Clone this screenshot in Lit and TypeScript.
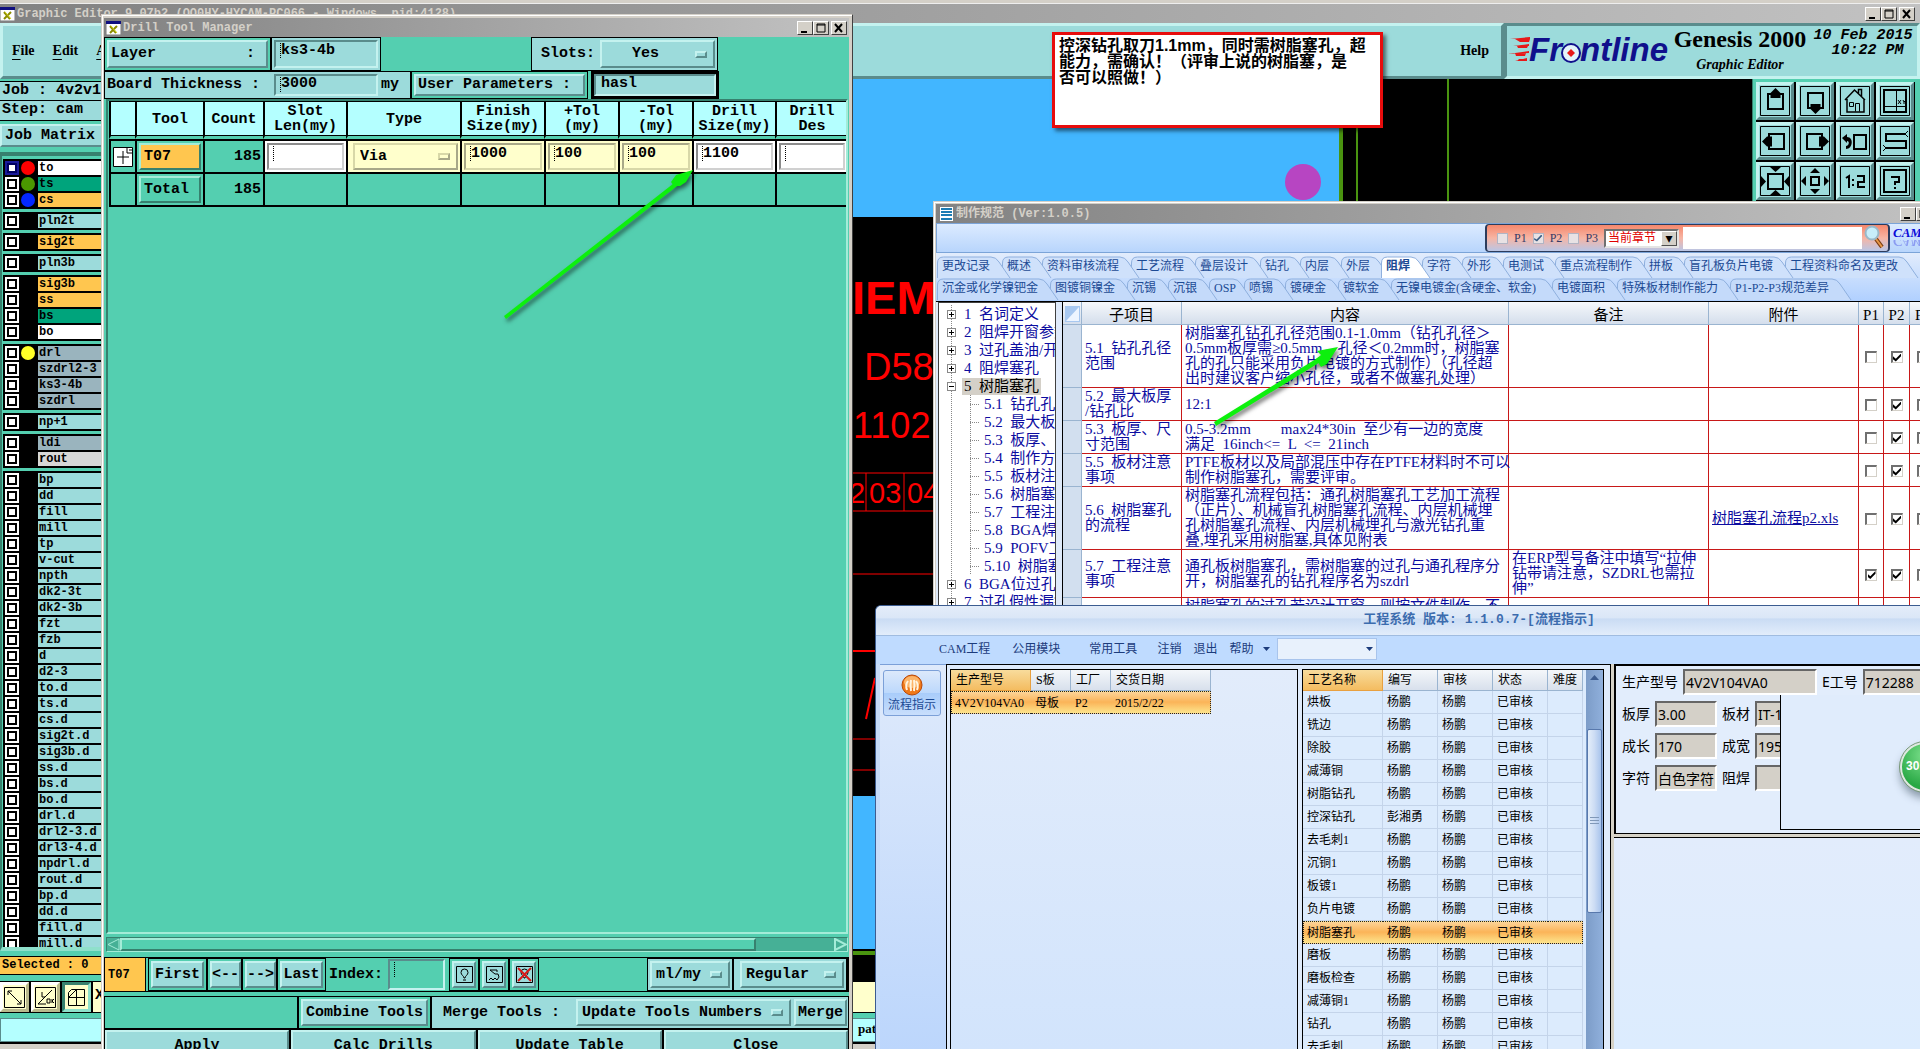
import { LitElement, html, svg, css } from "lit";
import { customElement } from "lit/decorators.js";
import { classMap } from "lit/directives/class-map.js";

const base = css`
  *, *::before, *::after { box-sizing: border-box; }
  :host {
    --teal: #54cfb0;
    --cyan: #9cdbdb;
    --ice: #b4ffff;
    --amber: #ffc64f;
    --cream: #ffffcc;
    --lite: #c4f2ef;
    --dim: #5a8c8c;
    --mono: "Liberation Mono", "DejaVu Sans Mono", monospace;
    --song: "Liberation Serif", "Noto Sans CJK SC", serif;
    display: block;
    overflow: hidden;
  }
  button, input, select { font: inherit; color: inherit; margin: 0; border-radius: 0; outline: 0; }
  button { cursor: pointer; padding: 0; }
  .title {
    display: flex; align-items: center; gap: 2px; height: 19px; padding: 0 2px;
    background: linear-gradient(90deg, #828282, #c2c2c2);
    color: #d4d0c8; font: bold 12px/16px var(--mono); white-space: pre;
  }
  .title > svg { flex: none; }
  .title .txt { flex: 1; overflow: hidden; }
  .wc { display: flex; }
  .wc button {
    width: 16px; height: 14px; background: #d4d0c8; display: block;
    border: 1px solid; border-color: #fff #404040 #404040 #fff;
  }
  .wc button:last-child { margin-left: 2px; }
  .wc svg { display: block; }
  .raised { border: 2px solid; border-color: var(--lite) var(--dim) var(--dim) var(--lite); background: var(--cyan); }
  .sunk { border: 2px solid; border-color: var(--dim) var(--lite) var(--lite) var(--dim); background-color: var(--cyan); }
`;

const controls = html`<div class="wc">
  <button aria-label="Minimize"><svg width="14" height="12"><path d="M3 9h6v2H3z" /></svg></button>
  <button aria-label="Maximize"><svg width="14" height="12"><path d="M3 2h8v8H3zM3 3h8" fill="none" stroke="#000" /></svg></button>
  <button aria-label="Close"><svg width="14" height="12"><path d="M3 2l7 8M10 2l-7 8" stroke="#000" stroke-width="2" /></svg></button>
</div>`;

const xIcon = html`<svg width="15" height="14" viewBox="0 0 15 14" aria-hidden="true">
  <path d="M0 0h15v14H0z" fill="#fff" stroke="#777" /><path d="M0 0h15v3H0z" fill="#101080" />
  <path d="M4 5l6 7M11 5l-7 7" stroke="#8c8c00" stroke-width="2" /><path d="M5 5l6 7" stroke="#d8d820" />
</svg>`;

type Layer = [name: string, fill: string, dot?: string];
const groups: Layer[][] = [
  [["to", "white", "red"], ["ts", "green", "green"], ["cs", "amber", "blue"]],
  [["pln2t", "cyan"]],
  [["sig2t", "amber"]],
  [["pln3b", "cyan"]],
  [["sig3b", "amber"], ["ss", "amber"], ["bs", "green"], ["bo", "white"]],
  [["drl", "slate", "yellow"], ["szdrl2-3", "slate"], ["ks3-4b", "slate"], ["szdrl", "slate"]],
  [["np+1", "cyan"]],
  [["ldi", "slate"], ["rout", "grey"]],
  ["bp", "dd", "fill", "mill", "tp", "v-cut", "npth", "dk2-3t", "dk2-3b", "fzt", "fzb", "d", "d2-3",
    "to.d", "ts.d", "cs.d", "sig2t.d", "sig3b.d", "ss.d", "bs.d", "bo.d", "drl.d", "drl2-3.d", "drl3-4.d",
    "npdrl.d", "rout.d", "bp.d", "dd.d", "fill.d", "mill.d"].map((n): Layer => [n, "cyan"]),
];

const box = svg`<path d="M.5 .5h29v29H.5z" fill="none" stroke="#000" />`;
const tools: [string, unknown][] = [
  ["Pan up", svg`${box}<path d="M8 8h15v15H8z" fill="none" stroke="#000" stroke-width="2"/><path d="M15.500 2l5 5v5h-10V7z"/>`],
  ["Pan down", svg`${box}<path d="M8 7h15v15H8z" fill="none" stroke="#000" stroke-width="2"/><path d="M15.500 28l-5-5v-5h10v5z"/>`],
  ["Home", svg`${box}<g fill="none" stroke="#000"><path d="M5 14L14.500 4 25 14M7 13v13h17V13M18.500 8V3.500h3V11" stroke-width="1.500"/><path d="M9.500 16.500h4v4h-4zM15.500 25.500v-8h4v8"/></g>`],
  ["XY view", svg`${box}<g fill="none" stroke="#000"><path d="M4 4h22v22H4z" stroke-width="2"/><path d="M16.500 4v22M4 20.500h22M18 14l3 4M21 14l-3 4M23 14l1 2 2-2M24 16v2"/></g>`],
  ["Pan left", svg`${box}<path d="M9 8h15v15H9z" fill="none" stroke="#000" stroke-width="2"/><path d="M2 15.500l5-5h5v10H7z"/>`],
  ["Pan right", svg`${box}<path d="M7 8h15v15H7z" fill="none" stroke="#000" stroke-width="2"/><path d="M29 15.500l-5-5h-5v10h5z"/>`],
  ["Previous view", svg`${box}<path d="M14 9h12v14H14z" fill="none" stroke="#000" stroke-width="2"/><path d="M2 12l5-4v3c7 0 6 12-1 12v-3c3 0 4-5 1-5v2z"/>`],
  ["Snake", svg`${box}<path d="M26 8H6v7h20v7H6" fill="none" stroke="#000" stroke-width="2"/><path d="M25 8l3-3M25 8l3 3M6 22l-3-3M6 22l-3 3" stroke="#000"/>`],
  ["Zoom in", svg`${box}<path d="M8 8h15v15H8z" fill="none" stroke="#000" stroke-width="2"/><path d="M10 1h11l-5.500 5zM10 29h11l-5.500-5zM1 10v11l5-5.500zM29 10v11l-5-5.500z"/>`],
  ["Zoom out", svg`${box}<path d="M11 11h8v8h-8z" fill="none" stroke="#000" stroke-width="2"/><path d="M10 7h10l-5-5zM10 23h10l-5 5zM6 10v10l-5-5zM24 10v10l5-5z"/>`],
  ["Scale 1:2", svg`${box}<path d="M6 12l3-2v12M13 13v2M13 18v2M17 10h7v6h-6v5h7" fill="none" stroke="#000" stroke-width="2"/>`],
  ["Help", svg`${box}<path d="M4 4h22v22H4zM11 11h8v5h-4v3M15 21v2" fill="none" stroke="#000" stroke-width="2"/>`],
];

@customElement("graphic-editor")
class GraphicEditor extends LitElement {
  static styles = [base, css`
    :host { display: flex; flex-direction: column; background: var(--teal); color: #000; }
    .title { border-top: 0; flex: none; padding: 0 5px 0 0; }
    .edge { height: 4px; flex: none; background: #d4d0c8; border-bottom: 1px solid #eee; }
    .top { display: flex; flex: none; height: 56px; }
    .menu {
      flex: 1; display: flex; align-items: center; gap: 18px; padding: 0 12px 0 9px;
      font: bold 14px/18px "Liberation Serif", serif; border-width: 3px;
    }
    .menu button { background: none; border: 0; }
    .menu button:last-child { margin-left: auto; }
    .menu u { text-underline-offset: 4px; }
    .brand { flex: none; display: grid; grid-template-columns: 163px 139px 1fr; border-width: 3px; width: 416px; border-color: var(--dim) var(--lite) var(--lite) var(--dim); }
    .brand h1 { margin: 0; font: bold 24px/26px "Liberation Serif", serif; text-align: center; }
    .brand p { margin: 0; font: italic bold 14px/18px "Liberation Serif", serif; text-align: center; }
    .brand .name { display: grid; align-content: start; row-gap: 4px; white-space: nowrap; }
    .brand time { font: italic bold 15px/15px var(--mono); text-align: center; white-space: pre; padding-top: 2px; }
    .mid { flex: 1; min-height: 0; display: flex; }
    .side { width: 110px; flex: none; display: flex; flex-direction: column; font: bold 15px/18px var(--mono); white-space: nowrap; }
    .line { height: 20px; flex: none; padding: 0 2px; background: var(--cyan); border: 1px solid #000; border-width: 1px 0; }
    .line:first-child { margin-top: 2px; }
    .line + .line { height: 20px; border-top: 0; }
    .matrix { margin: 3px 0 5px; flex: none; height: 23px; border-width: 2px; text-align: left; padding-left: 3px; }
    .layers { flex: 1; min-height: 0; overflow: hidden; border: solid #37806e; border-width: 4px 0 0 2px; border-bottom: 4px solid #8fe0cb; padding: 3px 0 0 1px; display: flex; flex-direction: column; gap: 3px; font: bold 12px/14px var(--mono); }
    .grp { background: #000; padding: 1px 0; flex: none; }
    .lay { display: grid; grid-template-columns: 14px 15px 1fr; column-gap: 2px; height: 16px; padding: 1px 2px; align-items: center; }
    .lay input { appearance: none; width: 14px; height: 14px; border: 3px solid #fff; background: #fff; display: grid; }
    .lay input::before { content: ""; border: 2px solid #000; margin: -1px; }
    .lay input:checked { border-color: #1a1a9a; background: #1a1a9a; }
    .lay input:checked::before { background: #fff; border-color: #000060; }
    .dot { width: 14px; height: 14px; border-radius: 7px; }
    .name { padding-left: 1px; }
    .red { background: #f00; } .green { background: #4a9800; } .blue { background: #0428ff; } .yellow { background: #ffff28; }
    .n-white { background: #fff; } .n-green { background: #00a47c; } .n-amber { background: var(--amber); }
    .n-cyan { background: var(--cyan); } .n-slate { background: #9ab4be; } .n-grey { background: #d8d8d8; }
    .canvas { flex: 1; min-width: 0; background: #000; }
    .canvas svg { display: block; }
    .tools { flex: none; width: 168px; padding: 3px 5px 0 3px; border-left: 1px solid #37806e; }
    .tools > div { display: grid; grid-template-columns: repeat(4, 38px); gap: 2px; background: #000; padding-bottom: 2px; }
    .tools button { height: 38px; border-width: 3px; display: grid; place-items: center; }
    .sel { flex: none; height: 19px; margin: 5px 0 6px; background: var(--amber); border: 1px solid #000; border-width: 1px 0; font: bold 12px/16px var(--mono); padding-left: 2px; }
    .foot { flex: none; height: 68px; display: grid; grid-template-rows: 32px 5px 24px 1fr; }
    .snap { display: flex; gap: 2px; background: #000; padding: 1px 0; }
    .snap button { width: 29px; background: var(--cream); border: 3px solid; border-color: #fff #b9b98c #b9b98c #fff; display: grid; place-items: center; }
    .snap button:nth-child(3) { border-color: #37806e #8fe0cb #8fe0cb #37806e; }
    .snap label { flex: 1; background: var(--cream); font: bold 15px/28px var(--mono); padding-left: 2px; }
    .msg { grid-row: 3; background: var(--ice); border: 1px solid var(--dim); font: bold 13px/20px "Liberation Serif", serif; padding-left: 857px; }
    .rim { grid-row: 4; background: #d4d0c8; border-top: 2px solid #000; }
  `];
  render() {
    return html`
      <div class="edge"></div>
      <div class="title">${xIcon}<span class="txt">Graphic Editor 9.07b2 (OO0HY-HYCAM-PC066 - Windows  pid:4128)</span>${controls}</div>
      <div class="top">
        <nav class="menu raised"><button><u>F</u>ile</button><button><u>E</u>dit</button><button><u>A</u>ctions</button><button>Help</button></nav>
        <div class="brand raised">
          <svg width="163" height="46" viewBox="0 0 163 46" role="img" aria-label="Frontline">
            <path d="M3 13l20-2v2zM6 20l16-2v2zM1 28l21-3v2zM8 35l12-3v3zM8 13h15l-1 3h-9zM10 20h11l-1 2h-9zM8 27h11l-1 3h-9zM12 33h7l-1 2h-8z" fill="#e81818" />
            <g font-family="Liberation Sans" font-weight="bold" font-style="italic" font-size="33" fill="#10108c">
              <text x="22" y="35">Fr</text><text x="73" y="35">ntline</text></g>
            <circle cx="64" cy="27" r="9" fill="#e4f4fa" stroke="#10108c" stroke-width="2" /><path d="M64 23l4 4-4 4-4-4z" fill="#e81818" />
          </svg>
          <div class="name"><h1>Genesis 2000</h1><p>Graphic Editor</p></div>
          <time>10 Feb 2015
 10:22 PM</time>
        </div>
      </div>
      <div class="mid">
        <div class="side">
          <div class="line">Job : 4v2v104va0</div><div class="line">Step: cam</div>
          <button class="matrix raised">Job Matrix</button>
          <div class="layers">${groups.map((g) => html`<div class="grp">${g.map(([n, c, d]) => html`
            <label class="lay"><input type="checkbox" ?checked=${n === "to"} /><span class="dot ${d ?? ""}"></span><span class="name n-${c}">${n}</span></label>`)}</div>`)}
          </div>
          <div class="sel">Selected : 0</div>
        </div>
        <div class="canvas"><svg width="1640" height="902" viewBox="110 79 1640 902">
          <path d="M110 79h1229v138H110zM110 796h1229v153H110z" fill="#42b6ff" />
          <path d="M1339 79h4v140h-4zM1356 79h2v140h-2zM1447 79h2v140h-2zM110 951h1229v4H110z" fill="#4a9410" />
          <circle cx="1303" cy="182" r="18" fill="#b745c2" />
          <g fill="#f00" font-family="Liberation Sans">
            <text x="852" y="314" font-size="47" font-weight="bold">IEM</text>
            <text x="864" y="380" font-size="38">D58</text>
            <text x="853" y="438" font-size="36">1102</text>
            <text x="849" y="503" font-size="29">2</text><text x="869" y="503" font-size="29">03</text><text x="907" y="503" font-size="29">04</text>
          </g>
          <path d="M850 473h90M850 511h90M866 473v38M904 473v38M850 574h90M850 739h30M850 770h30" stroke="#f00" fill="none" />
          <path d="M850 651h30M875 678l-9 41" stroke="#f00" stroke-width="2" fill="none" />
        </svg></div>
        <div class="tools"><div>${tools.map(([t, i]) => html`<button class="raised" aria-label=${t}><svg width="30" height="30">${i}</svg></button>`)}</div></div>
      </div>
      <div class="foot">
        <div class="snap">
          <button aria-label="Diagonal"><svg width="21" height="21" fill="none" stroke="#000"><path d="M.5 .5h20v20H.5zM4 4l13 13M4 8V4h4M17 13v4h-4"/></svg></button>
          <button aria-label="Angle"><svg width="21" height="21" fill="none" stroke="#000"><path d="M.5 .5h20v20H.5zM3 17L17 3M3 17h8M7 5v5h3M12 12h3v4h-3zM17 12v4M19 12l-2 2 2 2"/></svg></button>
          <button aria-label="Grid"><svg width="21" height="21" fill="none" stroke="#000"><path d="M2.500 5.500l3-3h13v16h-16zM2.500 10.500h16M10.500 2.500v16M2.500 10.500l8-8"/></svg></button>
          <label>X</label>
        </div>
        <div class="msg">pattern</div>
        <div class="rim"></div>
      </div>`;
  }
}

@customElement("drill-manager")
class DrillManager extends LitElement {
  static styles = [base, css`
    :host { display: flex; flex-direction: column; background: #d4d0c8; border: 1px solid; border-color: #d4d0c8 #404040 #404040 #d4d0c8; box-shadow: inset 1px 1px #fff; padding: 3px 3px 0 2px; font: bold 15px/18px var(--mono); color: #000; }
    .body { flex: 1; min-height: 0; background: var(--teal); display: flex; flex-direction: column; white-space: pre; }
    .row { display: flex; flex: none; white-space: nowrap; }
    .r1 { height: 34px; } .r2 { height: 28px; }
    .cell { border: 1px solid #000; padding: 2px; display: flex; align-items: stretch; background: var(--teal); }
    .cell.c { background: var(--cyan); align-items: center; }
    .cell.c > * { align-self: stretch; }
    .cell.c > label, .cell.c > span { align-self: center; }
    .cell.c > .opt { align-self: stretch; }
    .cell > button { flex: 1; text-align: left; padding-left: 2px; white-space: pre; }
    .w1 { width: 167px; } .w2 { width: 110px; } .w3 { width: 187px; margin-left: 150px; padding-left: 9px; gap: 5px; }
    .w4 { width: 307px; gap: 3px; } .w4 label { width: 164px; } .w5 { width: 177px; } .w6 { width: 128px; margin-left: 3px; border-width: 3px; padding: 0; }
    input { min-width: 0; flex: 1; font-weight: bold; padding: 0 4px 7px 5px; }
    .w4 input { flex: none; width: 104px; padding-bottom: 3px; }
    .w6 input { padding-bottom: 2px; }
    .ibeam { background-image: repeating-linear-gradient(#000 0 1px, transparent 1px 2px); background-size: 1px 15px; background-position: 4px 1px; background-repeat: no-repeat; }
    .opt { display: grid; flex: 1; align-items: center; }
    .opt select { grid-area: 1 / 1; height: 100%; width: 100%; appearance: none; padding: 0 4px; font-weight: bold; }
    .opt::after { content: ""; grid-area: 1 / 1; justify-self: end; margin-right: 8px; width: 12px; height: 7px; border: 2px solid; border-color: var(--lite) var(--dim) var(--dim) var(--lite); pointer-events: none; }
    .w3 select { padding-left: 30px; }
    .view { flex: 1; min-height: 0; overflow: hidden; margin: 0 1px 0 2px; border: 2px solid; border-color: #37806e #a4ecd8 #a4ecd8 #37806e; padding-left: 1px; }
    table { border-collapse: separate; border-spacing: 0; table-layout: fixed; width: 738px; }
    th { height: 38px; background: var(--ice); border-left: 2px solid #000; border-top: 1px solid #000; border-bottom: 3px solid var(--teal); box-shadow: inset 0 -1px #000; padding: 0; line-height: 15px; }
    td { height: 33px; border-left: 2px solid #000; border-top: 2px solid #000; padding: 2px; text-align: right; }
    tr:last-child td { border-bottom: 2px solid #000; height: 34px; }
    td input, td button, td .opt { width: 100%; height: 27px; display: block; }
    td .opt { display: grid; }
    td input { border: 2px solid; border-color: #8c8c8c #d0d0d0 #d0d0d0 #8c8c8c; background-color: #fff; }
    .y { background: var(--cream); }
    .y input, .y select { background-color: var(--cream); border-color: #a8a888 #d8d8a8 #d8d8a8 #a8a888; }
    .y select { border-color: #d8d8a8 #a8a888 #a8a888 #d8d8a8; padding-left: 5px; }
    .y .opt { padding-left: 3px; }
    .y .opt::after { border-color: #d8d8a8 #a8a888 #a8a888 #d8d8a8; }
    .wh { background: #fff; }
    .tool { text-align: left; padding-left: 3px; border-color: #a4ecd8 #37806e #37806e #a4ecd8; background: var(--teal); }
    .tool.on { background: var(--amber); }
    td svg { display: block; margin: auto; }
    .sb { height: 15px; flex: none; margin: 3px 1px 5px 2px; display: flex; background: #46b096; border: 1px solid; border-color: #37806e #a4ecd8 #a4ecd8 #37806e; }
    .sb .thumb { flex: none; width: 636px; background: var(--teal); border: 2px solid; border-color: #a4ecd8 #37806e #37806e #a4ecd8; }
    .sb svg { flex: none; } .sb svg:last-child { margin-left: auto; }
    .bar { height: 35px; border: 1px solid #000; padding-right: 0; border-right: 2px solid #000; }
    .bar .cell { border-width: 1px; }
    .bar .cell > button { text-align: center; padding: 0; }
    .now { width: 41px; background: var(--amber); font-size: 12px; display: flex; align-items: center; padding-left: 3px; border-right: 1px solid #000; margin-right: 2px; }
    .b1 { width: 59px; } .b2 { width: 35px; } .b3 { width: 49px; } .b4 { width: 30px; }
    .idx { display: flex; align-items: center; padding: 1px 4px 1px 3px; gap: 5px; width: 123px; }
    .idx input { align-self: stretch; background-color: var(--teal); }
    .u1 { width: 86px; margin-left: auto; } .u2 { width: 114px; padding-left: 6px; }
    .bar .cell button svg { display: block; margin: auto; }
    .merge { height: 33px; margin-top: 4px; border: 1px solid #000; justify-content: flex-end; }
    .merge .cell { border-width: 0 0 0 2px; }
    .m1 { width: 133px; } .m1 > button, .m2 > button { text-align: center; padding: 0; } .m2 { width: 418px; padding-right: 1px; } .m2 label { padding: 0 10px 0 9px; width: 142px; }
    .m2 .opt { flex: none; width: 215px; margin-right: 3px; }
    .acts { height: 34px; display: grid; grid-template-columns: repeat(4, 1fr); background: #000; gap: 2px; padding: 1px; }
  `];
  render() {
    const inp = (v: string, l: string) => html`<input class="ibeam" .value=${v} aria-label=${l} />`;
    return html`
      <div class="title">${xIcon}<span class="txt">Drill Tool Manager</span>${controls}</div>
      <div class="body"><div class="row r1">
          <div class="cell w1"><button class="raised">Layer          :</button></div>
          <div class="cell w2 c"><input class="sunk ibeam" value="ks3-4b" aria-label="Layer" /></div>
          <div class="cell w3 c"><label for="slots">Slots:</label><span class="opt"><select id="slots" class="raised"><option>Yes</option></select></span></div>
        </div>
        <div class="row r2">
          <div class="cell w4 c"><label for="thick">Board Thickness :</label><input id="thick" class="sunk ibeam" value="3000" /><span>my</span></div>
          <div class="cell w5"><button class="raised">User Parameters :</button></div>
          <div class="cell w6 c"><input class="sunk" value="hasl" aria-label="User parameters" /></div>
        </div>
        <div class="view"><table>
          <colgroup>${[26, 68, 60, 83, 114, 84, 74, 74, 83, 72].map((w) => html`<col width=${w} />`)}</colgroup>
          <thead><tr><th></th><th>Tool</th><th>Count</th><th>Slot
Len(my)</th><th>Type</th><th>Finish
Size(my)</th><th>+Tol
(my)</th><th>-Tol
(my)</th><th>Drill
Size(my)</th><th>Drill
Des</th></tr></thead>
          <tbody>
            <tr><td><svg width="20" height="20" fill="#fff" stroke="#000"><path d="M.5 .5h19v19H.5z"/><path d="M10 4v13M4 10h12M14 1v5h5M16 3h3"/></svg></td>
              <td><button class="tool on raised">T07</button></td><td>185</td>
              <td class="wh">${inp("", "Slot length")}</td>
              <td class="y"><span class="opt"><select class="raised" aria-label="Type"><option>Via</option></select></span></td>
              <td class="y">${inp("1000", "Finish size")}</td><td class="y">${inp("100", "+Tol")}</td><td class="y">${inp("100", "-Tol")}</td>
              <td class="wh">${inp("1100", "Drill size")}</td><td class="wh">${inp("", "Drill designation")}</td></tr>
            <tr><td></td><td><button class="tool raised">Total</button></td><td>185</td><td></td><td></td><td></td><td></td><td></td><td></td><td></td></tr>
          </tbody></table></div>
        <div class="sb">
          <svg width="13" height="13"><path d="M12 1L1 6.500l11 5.500z" fill="#46b096" stroke="#a4ecd8"/></svg><div class="thumb"></div>
          <svg width="13" height="13"><path d="M1 1l11 5.500L1 12z" fill="#46b096" stroke="#a4ecd8" stroke-width="2"/></svg></div>
        <div class="row bar">
          <div class="now">T07</div>
          <div class="cell b1"><button class="raised">First</button></div><div class="cell b2"><button class="raised">&lt;--</button></div>
          <div class="cell b2"><button class="raised">--&gt;</button></div><div class="cell b3"><button class="raised">Last</button></div>
          <div class="idx"><label for="idx">Index:</label><input id="idx" class="sunk ibeam" /></div>
          <div class="cell b4"><button class="raised" aria-label="Highlight"><svg width="17" height="17" fill="none" stroke="#000"><path d="M.5 .5h16v16H.5zM8 12c0-2-3-3-3-5.500a3.500 3.500 0 017 0c0 2.500-3 3.500-3 5.500zM7 14h3"/></svg></button></div>
          <div class="cell b4"><button class="raised" aria-label="Route"><svg width="17" height="17" fill="none" stroke="#000"><path d="M.5 .5h16v16H.5zM11 6V4H4l5 4h3l1 3-2 3-2-2-2 2-2-2-2 2"/></svg></button></div>
          <div class="cell b4"><button class="raised" aria-label="Clear highlight"><svg width="17" height="17" fill="none" stroke="#000"><path d="M.5 .5h16v16H.5zM8 12c0-2-3-3-3-5.500a3.500 3.500 0 017 0c0 2.500-3 3.500-3 5.500z"/><path d="M2 2l13 13M15 2L2 15" stroke="#d81818" stroke-width="2"/></svg></button></div>
          <div class="cell c u1"><span class="opt"><select class="raised" aria-label="Units"><option>ml/my</option></select></span></div>
          <div class="cell c u2"><span class="opt"><select class="raised" aria-label="Mode"><option>Regular</option></select></span></div>
        </div>
        <div class="row merge">
          <div class="cell m1"><button class="raised">Combine Tools</button></div>
          <div class="cell c m2"><label for="merge">Merge Tools :</label><span class="opt"><select id="merge" class="raised"><option>Update Tools Numbers</option></select></span><button class="raised">Merge</button></div>
        </div>
        <div class="acts">${["Apply", "Calc Drills", "Update Table", "Close"].map((t) => html`<button class="raised">${t}</button>`)}</div>
      </div>`;
  }
}

const tabRows = [
  ["更改记录", "概述", "资料审核流程", "工艺流程", "叠层设计", "钻孔", "内层", "外层", "阻焊", "字符", "外形", "电测试", "重点流程制作", "拼板", "盲孔板负片电镀", "工程资料命名及更改"],
  ["沉金或化学镍钯金", "图镀铜镍金", "沉锡", "沉银", "OSP", "喷锡", "镀硬金", "镀软金", "无镍电镀金(含硬金、软金)", "电镀面积", "特殊板材制作能力", "P1-P2-P3规范差异"],
];
const tabWidth = (t: string) => 17 + [...t].reduce((w, c) => w + (c.charCodeAt(0) < 256 ? 6 : 12), 0);

const tree: [string, number, string?][] = [
  ["1  名词定义", 0, "+"], ["2  阻焊开窗参数", 0, "+"], ["3  过孔盖油/开窗", 0, "+"], ["4  阻焊塞孔", 0, "+"], ["5  树脂塞孔", 0, "-"],
  ["5.1  钻孔孔径范围", 1], ["5.2  最大板厚/钻孔比", 1], ["5.3  板厚、尺寸范围", 1], ["5.4  制作方法", 1], ["5.5  板材注意事项", 1],
  ["5.6  树脂塞孔的流程", 1], ["5.7  工程注意事项", 1], ["5.8  BGA焊盘", 1], ["5.9  POFV工艺", 1], ["5.10  树脂塞孔", 1],
  ["6  BGA位过孔阻焊", 0, "+"], ["7  过孔假性漏铜", 0, "+"],
];

interface Spec { h: number; item: string; text: string; note?: string; file?: string; p1?: boolean; }
const specs: Spec[] = [
  { h: 63, item: "5.1  钻孔孔径\n范围", text: "树脂塞孔钻孔孔径范围0.1-1.0mm（钻孔孔径＞\n0.5mm板厚需≥0.5mm，孔径＜0.2mm时，树脂塞\n孔的孔只能采用负片电镀的方式制作）（孔径超\n出时建议客户缩小孔径，或者不做塞孔处理）" },
  { h: 33, item: "5.2  最大板厚\n/钻孔比", text: "12:1" },
  { h: 33, item: "5.3  板厚、尺\n寸范围", text: "0.5-3.2mm        max24*30in  至少有一边的宽度\n满足  16inch<=  L  <=  21inch" },
  { h: 33, item: "5.5  板材注意\n事项", text: "PTFE板材以及局部混压中存在PTFE材料时不可以\n制作树脂塞孔，需要评审。" },
  { h: 63, item: "5.6  树脂塞孔\n的流程", text: "树脂塞孔流程包括：通孔树脂塞孔工艺加工流程\n（正片）、机械盲孔树脂塞孔流程、内层机械埋\n孔树脂塞孔流程、内层机械埋孔与激光钻孔重\n叠,埋孔采用树脂塞,具体见附表", file: "树脂塞孔流程p2.xls" },
  { h: 48, item: "5.7  工程注意\n事项", text: "通孔板树脂塞孔，需树脂塞的过孔与通孔程序分\n开，树脂塞孔的钻孔程序名为szdrl", note: "在ERP型号备注中填写“拉伸\n钻带请注意，SZDRL也需拉\n伸”", p1: true },
  { h: 48, item: "", text: "树脂塞孔的过孔若设计开窗，则按文件制作，不\n需要更改\n按要求" },
];

@customElement("spec-window")
class SpecWindow extends LitElement {
  static styles = [base, css`
    :host { display: flex; flex-direction: column; background: #d4d0c8; border: 1px solid #d4d0c8; box-shadow: inset 1px 1px #fff; padding: 2px; font: 12px/16px var(--song); }
    .title { flex: none; font-family: "Liberation Mono", "Noto Sans CJK SC", monospace; padding: 0 4px; gap: 3px; }
    .title .txt { flex: none; width: 941px; }
    .strip { flex: none; height: 30px; display: flex; border: 1px solid #7ba4d8; background: linear-gradient(#dcebff, #b8d5fc); padding-left: 548px; }
    .find { width: 405px; flex: none; display: flex; align-items: center; gap: 4px; padding: 0 4px 0 10px; border: 1px solid #2c3c5c; border-width: 1px 2px; border-radius: 4px; background: linear-gradient(#f5876c, #f7b5a4 50%, #b9c6e6); color: #333a66; }
    .find label { display: flex; align-items: center; gap: 6px; margin-right: 2px; }
    .find [type="checkbox"] { appearance: none; width: 11px; height: 11px; background: #e8e2e4; border: 1px solid #b0b4c4; display: grid; place-items: center; }
    .find [type="checkbox"]:checked::before { content: ""; width: 8px; height: 7px; background: #3a5c84; clip-path: polygon(0 50%, 30% 70%, 90% 0, 100% 20%, 35% 100%, 0 75%); }
    .pick { display: grid; width: 75px; height: 19px; }
    .pick select { grid-area: 1 / 1; width: 75px; height: 19px; appearance: none; background: #fff; border: 2px solid; border-color: #707070 #e4e4e4 #e4e4e4 #707070; color: #e00000; padding: 0 2px; line-height: 15px; }
    .pick::after { content: "▾"; grid-area: 1 / 1; justify-self: end; align-self: center; margin-right: 2px; width: 16px; height: 15px; background: #d4d0c8; border: 1px solid; border-color: #fff #505050 #505050 #fff; color: #000; font: 14px/12px "DejaVu Sans", sans-serif; text-align: center; pointer-events: none; }
    .find [type="search"] { appearance: none; flex: 1; min-width: 0; height: 22px; border: 0; background: #fff; }
    .find button { background: none; border: 0; width: 20px; height: 26px; margin-left: -2px; }
    .cam { color: #0a0ad8; font: italic bold 13px/14px "Liberation Serif", serif; padding: 2px 0 0 3px; }
    .cam span { display: block; opacity: .3; transform: scaleY(-1); height: 9px; overflow: hidden; }
    .tabs { flex: none; height: 49px; padding: 3px 0 0 1px; background: linear-gradient(#e2ecfc, #b0d0ff); border-bottom: 1px solid #000; }
    .tabs > div { display: flex; height: 22px; isolation: isolate; }
    .tab { position: relative; flex: none; border: 0; background: none; color: #1c4a94; text-align: left; padding: 0 0 2px 5px; white-space: nowrap; }
    .tab svg { position: absolute; left: 0; top: 0; z-index: -1; overflow: visible; stroke: #8fb0de; }
    .tab path { fill: #c4dafa; }
    .tab.alt path { fill: #cfe1fb; }
    .tab.on { font-weight: bold; } .tab.on path { fill: #fff; }
    .main { flex: 1; min-height: 0; display: flex; background: #dfeafa; font-size: 15px; line-height: 15px; color: #0c0ca0; }
    .tree { flex: none; width: 118px; margin: 0 6px 0 2px; overflow: hidden; background: #fff; border: 1px solid #404040; border-width: 1px 1px 0 1px; padding: 2px 0 0; list-style: none; white-space: pre; }
    .tree li { height: 18px; display: flex; align-items: center; padding-left: 8px; gap: 6px; background: repeating-linear-gradient(#888 0 1px, transparent 1px 2px) 12px 0 / 1px 18px no-repeat; }
    .tree li.kid { padding-left: 43px; background: repeating-linear-gradient(#888 0 1px, transparent 1px 2px) 12px 0 / 1px 18px no-repeat, repeating-linear-gradient(#888 0 1px, transparent 1px 2px) 31px 0 / 1px 18px no-repeat, repeating-linear-gradient(90deg, #888 0 1px, transparent 1px 2px) 31px 9px / 9px 1px no-repeat; }
    .tree button { width: 9px; height: 9px; flex: none; background: #fff; border: 1px solid #888; display: block; line-height: 0; }
    .tree span { padding: 1px 2px; }
    .tree .sel { background: #d4d0c8; color: #000; }
    .grid { flex: 1; overflow: hidden; background: #fff; border-left: 1px solid #000; }
    table { border-collapse: separate; border-spacing: 0; table-layout: fixed; width: 874px; white-space: pre; }
    th { height: 23px; font-weight: normal; color: #000; background: linear-gradient(#f6f8fb, #d4deec); border-right: 1px solid #9ab4d0; border-bottom: 1px solid #9ab4d0; padding: 4px 0 0; }
    th:first-child { padding: 0; }
    td { border-right: 1px solid #c81818; border-bottom: 1px solid #c81818; padding: 0 0 0 3px; }
    td:first-child { background: #d2dfef; border-color: #9ab4d0; }
    td.ck { padding: 0; text-align: center; }
    .ck input { appearance: none; width: 12px; height: 12px; border: 1px solid #d4d0c8; border-top: 2px solid #707070; border-left: 2px solid #707070; background: #fff; display: inline-grid; place-items: center; vertical-align: middle; }
    .ck input:checked::before { content: ""; width: 8px; height: 8px; background: #000; clip-path: polygon(0 35%, 35% 65%, 100% 0, 100% 35%, 35% 100%, 0 70%); }
    a { color: inherit; }
    .corner { display: block; margin: 1px 0 0 2px; }
  `];
  render() {
    const ck = (on: boolean, l: string) => html`<td class="ck"><input type="checkbox" ?checked=${on} aria-label=${l} /></td>`;
    return html`
      <div class="title"><svg width="13" height="14" aria-hidden="true"><path d="M0 0h13v14H0z" fill="#fff"/><path d="M1 2h11M1 5h11M1 8h11M1 12h11" stroke="#1c7cb4" stroke-width="2"/></svg><span class="txt">制作规范 (Ver:1.0.5)</span>${controls}</div>
      <div class="strip">
        <div class="find">
          <label><input type="checkbox" />P1</label><label><input type="checkbox" checked />P2</label><label><input type="checkbox" />P3</label>
          <span class="pick"><select aria-label="Scope"><option>当前章节</option></select></span>
          <input type="search" aria-label="Search" />
          <button aria-label="Search"><svg width="20" height="24"><path d="M12 14l6 8" stroke="#7a3c10" stroke-width="4"/><path d="M12 14l6 8" stroke="#e89848" stroke-width="2"/><circle cx="8" cy="8" r="6.500" fill="#c8eefa" stroke="#9ab8c8" stroke-width="2"/></svg></button>
        </div>
        <div class="cam">CAM<span aria-hidden="true">CAM</span></div>
      </div>
      <div class="tabs">${tabRows.map((r, ri) => html`<div>${r.map((t, i) => {
        const w = tabWidth(t);
        const on = t === "阻焊";
        return html`<button class=${classMap({ tab: true, on, alt: ri === 0 })} style="width:${w - (ri === 0 ? i % 2 : 0)}px;z-index:${on ? 40 : 30 - i}">
          <svg width=${w} height="22"><path d="M.5 22V7q0-6 6-6H${w - 11}q5 0 8 5L${w + 8} 22" /></svg>${t}</button>`;
      })}</div>`)}</div>
      <div class="main">
        <ul class="tree">${tree.map(([t, d, s]) => html`<li class=${d ? "kid" : ""}>${s ? html`<button aria-label="Toggle"><svg width="7" height="7" stroke="#000"><path d=${s === "+" ? "M1 3.5h5M3.5 1v5" : "M1 3.5h5"} /></svg></button>` : ""}<span class=${s === "-" ? "sel" : ""}>${t}</span></li>`)}</ul>
        <div class="grid"><table>
          <colgroup>${[19, 100, 327, 200, 150, 25, 26, 27].map((w) => html`<col width=${w} />`)}</colgroup>
          <thead><tr><th><svg class="corner" width="15" height="16"><path d="M0 0h15v16H0z" fill="#a8c8f0"/><path d="M14 1v14H1z" fill="#eef5ff"/></svg></th><th>子项目</th><th>内容</th><th>备注</th><th>附件</th><th>P1</th><th>P2</th><th>P3</th></tr></thead>
          <tbody>${specs.map((s) => html`<tr height=${s.h}><td></td><td>${s.item}</td><td>${s.text}</td><td>${s.note ?? ""}</td><td>${s.file ? html`<a href="#">${s.file}</a>` : ""}</td>${ck(!!s.p1, "P1")}${ck(true, "P2")}${ck(false, "P3")}</tr>`)}</tbody>
        </table></div>
      </div>`;
  }
}

const steps = ["烘板", "铣边", "除胶", "减薄铜", "树脂钻孔", "控深钻孔", "去毛刺1", "沉铜1", "板镀1", "负片电镀", "树脂塞孔", "磨板", "磨板检查", "减薄铜1", "钻孔", "去毛刺"];

@customElement("flow-window")
class FlowWindow extends LitElement {
  static styles = [base, css`
    :host { display: flex; flex-direction: column; border: 1px solid #3c5c90; border-width: 1px 0 0 1px; border-radius: 6px 0 0 0; background: #bfdbff; font: 12px/16px var(--song); color: #000; }
    .cap { flex: none; height: 30px; border-bottom: 1px solid #a0bce0; background: linear-gradient(#e4edf9, #dbe7f7 40%, #cadcf4 45%, #e2edfb); display: grid; place-items: center; font: bold 13px/16px "Liberation Mono", "Noto Sans CJK SC", monospace; color: #3c6cae; padding: 0 0 2px 162px; }
    .menu { flex: none; height: 28px; display: flex; align-items: center; padding: 0 0 2px 63px; color: #1c3c7c; }
    .menu button { background: none; border: 0; margin-right: 29px; }
    .menu button:first-child { margin-right: 22px; }
    .menu button:nth-child(3) { margin-right: 20px; }
    .menu button:nth-child(n + 4) { margin-right: 12px; }
    .menu > svg { margin: 0 7px 0 -2px; }
    .menu select { appearance: none; width: 100px; height: 22px; border: 1px solid #a8c4ec; background: #e8f1fc; }
    .menu .combo { display: grid; align-items: center; }
    .combo > * { grid-area: 1 / 1; } .combo svg { justify-self: end; pointer-events: none; margin: 0 4px; }
    .body { flex: 1; min-height: 0; display: flex; background: #d6d2c6; border-left: 4px solid #c6dcfa; }
    .nav { flex: none; width: 66px; padding: 5px 4px 0 3px; border-top: 1px solid #7ca0d8; background: linear-gradient(#dfeafb, #bcd6fc); }
    .nav button { width: 58px; height: 46px; border: 1px solid #7ca0d8; border-radius: 3px; background: linear-gradient(#dce9fb, #bcd8fc 50%, #a8ccfa 50%, #c8defc); color: #1c4a94; display: grid; place-items: center; align-content: center; gap: 1px; }
    .left { flex: none; width: 665px; display: flex; gap: 4px; border: 1px solid #000; border-bottom: 0; padding: 4px 6px 0 3px; background: #dfebfb; }
    .pane { border: 1px solid #000; border-bottom: 0; overflow: hidden; background: linear-gradient(#e2ecfb, #d2e4fc); display: flex; }
    .p1 { width: 348px; flex: none; } .p2 { flex: 1; justify-content: space-between; background: #dcebfd; }
    table { border-collapse: separate; border-spacing: 0; table-layout: fixed; align-self: flex-start; }
    .t1 { width: 260px; } .t2 { width: 280px; }
    th { height: 21px; font-weight: normal; text-align: left; padding: 0 0 0 5px; background: linear-gradient(#f4f7fa, #d8e0ec); border-right: 1px solid #9ab4d0; border-bottom: 1px solid #9ab4d0; }
    th:first-child { background: linear-gradient(#f8dc9c, #f4bc60); border-color: #e8a040; }
    td { height: 23px; padding: 0 0 0 4px; border-right: 1px solid #c4d4ea; border-bottom: 1px solid #c4d4ea; white-space: nowrap; }
    .hot td { background: linear-gradient(#fcd498, #fbb458 48%, #fde48c); border: 1px dotted #222; border-width: 1px 0; padding-left: 4px; }
    .hot td:first-child { border-left-width: 1px; padding-left: 3px; } .hot td:last-child { border-right-width: 1px; }
    .sb { width: 17px; background: linear-gradient(90deg, #7c9cc8, #90b0dc); display: flex; flex-direction: column; align-items: center; gap: 48px; padding-top: 5px; }
    .thumb { width: 15px; height: 184px; border: 1px solid #5878ac; border-radius: 2px; background: linear-gradient(90deg, #e4eefa, #ccdcf4 50%, #a8c4ec); display: grid; place-items: center; }
    .right { flex: 1; min-width: 0; margin-left: 3px; display: flex; flex-direction: column; gap: 3px; font: 14px/20px "Noto Sans", "Noto Sans CJK SC", sans-serif; }
    .info { position: relative; height: 170px; flex: none; border: 2px solid #000; border-width: 2px 0 1px 2px; background: #e2edfc; padding: 3px 0 0 6px; display: grid; grid-auto-rows: 26px; row-gap: 6px; overflow: hidden; }
    .f { display: flex; gap: 5px; align-items: center; white-space: nowrap; }
    .f input { flex: none; width: 62px; height: 26px; background: #d4d0c8; border: 2px solid; border-color: #666 #fff #fff #666; padding: 0 1px; }
    .f input.w { width: 134px; }
    .over { position: absolute; left: 164px; top: 29px; right: 0; height: 135px; background: #e0ecfc; border: 1px solid #000; border-width: 0 0 1px 1px; }
    .badge { position: absolute; right: -30px; top: 47px; width: 50px; height: 50px; border-radius: 25px; border: 2px solid #dfe8e0; outline: 1px solid #789878; background: radial-gradient(circle at 50% 25%, #7ce08c, #28a844 75%); color: #fff; font: bold 12px/44px "Liberation Sans", sans-serif; padding-left: 4px; box-shadow: 0 6px 8px #8898a8; }
    .rest { flex: 1; border-top: 1px solid #000; background: linear-gradient(#e2ecfc, #dcecfe); }
  `];
  render() {
    const f = (l: string, v: string, w = "") => html`<label>${l}</label><input class=${w} aria-label=${l} .value=${v} readonly />`;
    const arrow = html`<svg width="7" height="4" aria-hidden="true"><path d="M0 0h7L3.500 4z" fill="#1c3c7c"/></svg>`;
    return html`
      <div class="cap">工程系统 版本: 1.1.0.7-[流程指示]</div>
      <div class="menu"><button>CAM工程</button><button>公用模块</button><button>常用工具</button><button>注销</button><button>退出</button><button>帮助</button>${arrow}
        <span class="combo"><select aria-label="Quick search"></select>${arrow}</span></div>
      <div class="body">
        <div class="nav"><button><svg width="22" height="22"><circle cx="11" cy="11" r="10" fill="#f07818" stroke="#b84808"/><ellipse cx="11" cy="8" rx="8" ry="6" fill="#fcb468"/><path d="M6 16q-2-5 1-9M10 17q-1-6 0-11M13 17q1-6 0-11M16 16q2-5-1-9" stroke="#fff4e0" stroke-width="2" fill="none"/></svg>流程指示</button></div>
        <div class="left">
          <div class="pane p1"><table class="t1"><colgroup>${[80, 40, 40, 100].map((w) => html`<col width=${w} />`)}</colgroup>
            <thead><tr><th>生产型号</th><th>S板</th><th>工厂</th><th>交货日期</th></tr></thead>
            <tbody><tr class="hot"><td>4V2V104VA0</td><td>母板</td><td>P2</td><td>2015/2/22</td></tr></tbody></table></div>
          <div class="pane p2"><table class="t2"><colgroup>${[80, 55, 55, 55, 35].map((w) => html`<col width=${w} />`)}</colgroup>
            <thead><tr><th>工艺名称</th><th>编写</th><th>审核</th><th>状态</th><th>难度</th></tr></thead>
            <tbody>${steps.map((s) => html`<tr class=${s === "树脂塞孔" ? "hot" : ""}><td>${s}</td><td>${s === "控深钻孔" ? "彭湘勇" : "杨鹏"}</td><td>杨鹏</td><td>已审核</td><td></td></tr>`)}</tbody></table>
            <div class="sb"><svg width="9" height="6"><path d="M0 5h9L4.500 0z" fill="#3c5c90"/></svg><div class="thumb"><svg width="9" height="8"><path d="M0 .5h9M0 3.500h9M0 6.500h9" stroke="#8098b8"/></svg></div></div></div>
        </div>
        <div class="right">
          <div class="info">
            <div class="f">${f("生产型号", "4V2V104VA0", "w")}${f("E工号", "712288", "w")}</div>
            <div class="f">${f("板厚", "3.00")}${f("板材", "IT-180A")}</div>
            <div class="f">${f("成长", "170")}${f("成宽", "195")}</div>
            <div class="f">${f("字符", "白色字符")}${f("阻焊", "")}</div>
            <div class="over"><div class="badge">30</div></div>
          </div>
          <div class="rest"></div>
        </div>
      </div>`;
  }
}

@customElement("app-root")
class AppRoot extends LitElement {
  static styles = [base, css`
    :host { position: relative; height: 100vh; background: #000; }
    graphic-editor { height: 100%; }
    drill-manager, spec-window, flow-window, .note, .arrow { position: absolute; }
    drill-manager { left: 101px; top: 14px; bottom: -15px; width: 752px; }
    spec-window { left: 933px; top: 201px; right: -30px; height: 440px; }
    flow-window { left: 875px; top: 605px; right: 0; bottom: 0; }
    .note { left: 1052px; top: 32px; width: 331px; min-height: 96px; background: #fff; border: 3px solid #e80c0c; box-shadow: 3px 3px 4px #0008; padding: 3px 4px; font: bold 16px/16px "Liberation Sans", "Noto Sans CJK SC", sans-serif; color: #000; white-space: pre; }
    .arrow { filter: drop-shadow(2px 3px 2px #0008); pointer-events: none; }
    .a1 { left: 495px; top: 160px; } .a2 { left: 1205px; top: 340px; }
  `];
  render() {
    return html`<graphic-editor></graphic-editor><drill-manager></drill-manager><spec-window></spec-window><flow-window></flow-window>
      <div class="note">控深钻孔取刀1.1mm，同时需树脂塞孔，超
能力，需确认！（评审上说的树脂塞，是
否可以照做！）</div>
      <svg class="arrow a1" width="210" height="170" fill="#0df00d"><path d="M9 156L183 20l3 3L11 159z"/><path d="M198 10L181 15l-5 7 3 4 6 0 6-4z"/></svg>
      <svg class="arrow a2" width="150" height="100" fill="#0df00d"><path d="M9 82L114 17l3 4L11 86z"/><path d="M133 7L112 11l4 4-5 4 5 8 6-3z"/></svg>`;
  }
}
